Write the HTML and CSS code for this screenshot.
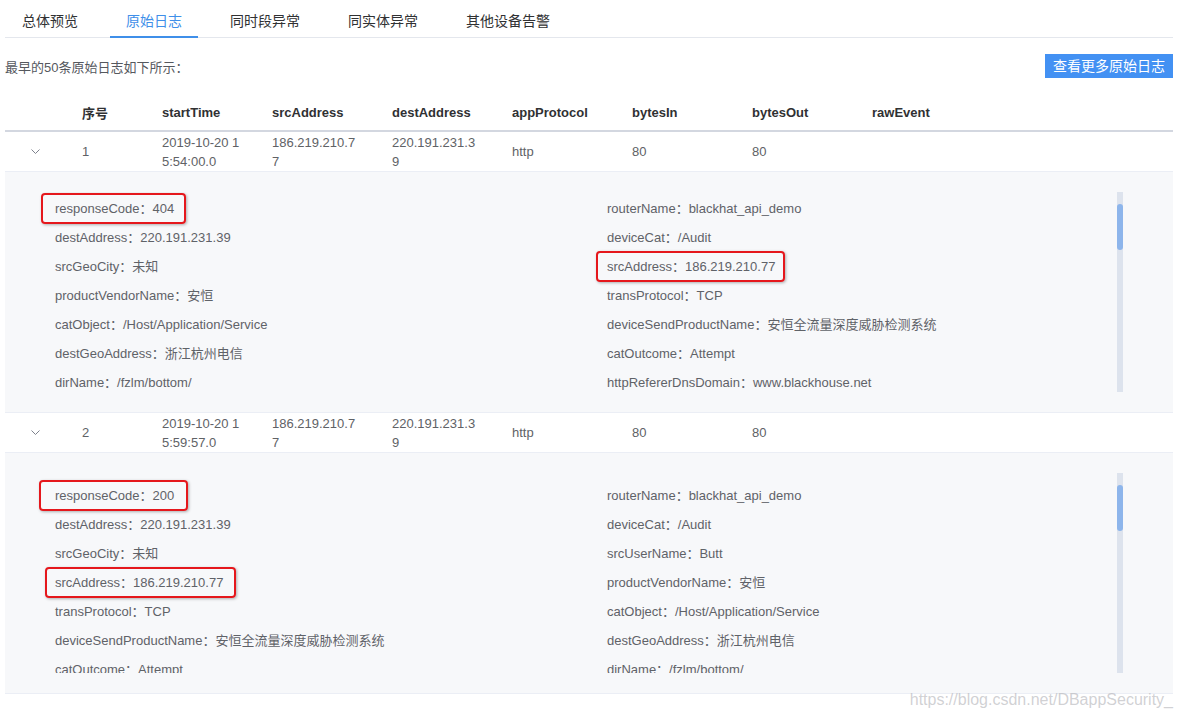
FILE: index.html
```html
<!DOCTYPE html>
<html lang="zh">
<head>
<meta charset="utf-8">
<title>原始日志</title>
<link rel="stylesheet" href="styles.css">
</head>
<body>
<div class="page">
  <nav class="tabs">
    <div class="tab">总体预览</div>
    <div class="tab active">原始日志</div>
    <div class="tab">同时段异常</div>
    <div class="tab">同实体异常</div>
    <div class="tab">其他设备告警</div>
  </nav>

  <div class="toolbar">
    <span class="subtitle">最早的50条原始日志如下所示：</span>
    <button class="btn">查看更多原始日志</button>
  </div>

  <div class="table">
    <div class="row head">
      <div class="c c-exp"></div>
      <div class="c">序号</div>
      <div class="c">startTime</div>
      <div class="c">srcAddress</div>
      <div class="c">destAddress</div>
      <div class="c">appProtocol</div>
      <div class="c">bytesIn</div>
      <div class="c">bytesOut</div>
      <div class="c">rawEvent</div>
    </div>

    <div class="row data">
      <div class="c c-exp"><svg class="chev" width="9" height="5" viewBox="0 0 9 5"><polyline points="0.5,0.5 4.5,4.5 8.5,0.5" fill="none" stroke="#7d818c" stroke-width="1"/></svg></div>
      <div class="c">1</div>
      <div class="c"><span class="wrap">2019-10-20 15:54:00.0</span></div>
      <div class="c"><span class="wrap">186.219.210.77</span></div>
      <div class="c"><span class="wrap">220.191.231.39</span></div>
      <div class="c">http</div>
      <div class="c">80</div>
      <div class="c">80</div>
      <div class="c"></div>
    </div>
    <div class="expand">
      <div class="scroll">
        <div class="list shifted">
          <div class="it"><span class="hl">responseCode：404</span></div>
          <div class="it"><span>routerName：blackhat_api_demo</span></div>
          <div class="it"><span>destAddress：220.191.231.39</span></div>
          <div class="it"><span>deviceCat：/Audit</span></div>
          <div class="it"><span>srcGeoCity：未知</span></div>
          <div class="it"><span class="hl hl-r">srcAddress：186.219.210.77</span></div>
          <div class="it"><span>productVendorName：安恒</span></div>
          <div class="it"><span>transProtocol：TCP</span></div>
          <div class="it"><span>catObject：/Host/Application/Service</span></div>
          <div class="it"><span>deviceSendProductName：安恒全流量深度威胁检测系统</span></div>
          <div class="it"><span>destGeoAddress：浙江杭州电信</span></div>
          <div class="it"><span>catOutcome：Attempt</span></div>
          <div class="it"><span>dirName：/fzlm/bottom/</span></div>
          <div class="it"><span>httpRefererDnsDomain：www.blackhouse.net</span></div>
        </div>
      </div>
      <div class="track"><div class="thumb"></div></div>
    </div>

    <div class="row data">
      <div class="c c-exp"><svg class="chev" width="9" height="5" viewBox="0 0 9 5"><polyline points="0.5,0.5 4.5,4.5 8.5,0.5" fill="none" stroke="#7d818c" stroke-width="1"/></svg></div>
      <div class="c">2</div>
      <div class="c"><span class="wrap">2019-10-20 15:59:57.0</span></div>
      <div class="c"><span class="wrap">186.219.210.77</span></div>
      <div class="c"><span class="wrap">220.191.231.39</span></div>
      <div class="c">http</div>
      <div class="c">80</div>
      <div class="c">80</div>
      <div class="c"></div>
    </div>
    <div class="expand">
      <div class="scroll">
        <div class="list">
          <div class="it"><span class="hl hl-l2">responseCode：200</span></div>
          <div class="it"><span>routerName：blackhat_api_demo</span></div>
          <div class="it"><span>destAddress：220.191.231.39</span></div>
          <div class="it"><span>deviceCat：/Audit</span></div>
          <div class="it"><span>srcGeoCity：未知</span></div>
          <div class="it"><span>srcUserName：Butt</span></div>
          <div class="it"><span class="hl hl-b">srcAddress：186.219.210.77</span></div>
          <div class="it"><span>productVendorName：安恒</span></div>
          <div class="it"><span>transProtocol：TCP</span></div>
          <div class="it"><span>catObject：/Host/Application/Service</span></div>
          <div class="it"><span>deviceSendProductName：安恒全流量深度威胁检测系统</span></div>
          <div class="it"><span>destGeoAddress：浙江杭州电信</span></div>
          <div class="it"><span>catOutcome：Attempt</span></div>
          <div class="it"><span>dirName：/fzlm/bottom/</span></div>
        </div>
      </div>
      <div class="track"><div class="thumb"></div></div>
    </div>
  </div>
</div>
<div class="watermark">https://blog.csdn.net/DBappSecurity_</div>
</body>
</html>
```

FILE: styles.css
```css
* { box-sizing: border-box; }

html, body {
  margin: 0;
  padding: 0;
  background: #ffffff;
}

body {
  font-family: "Liberation Sans", "Noto Sans CJK SC", sans-serif;
  color: #606266;
  font-size: 13px;
  position: relative;
  min-height: 717px;
}

.page {
  margin: 0 9px 0 5px;
}

/* Tabs */
.tabs {
  display: flex;
  height: 38px;
  border-bottom: 1px solid #e4e7ed;
}

.tab {
  position: relative;
  height: 37px;
  padding: 3px 24px 0;
  display: flex;
  align-items: center;
  font-size: 14px;
  color: #303133;
}

.tab:first-child {
  padding-left: 17px;
}

.tab.active {
  color: #3f8fe9;
}

.tab.active::after {
  content: "";
  position: absolute;
  left: 8px;
  right: 8px;
  bottom: -1px;
  height: 2px;
  background: #3f8fe9;
}

/* Toolbar */
.toolbar {
  margin-top: 16px;
  height: 24px;
  display: flex;
  align-items: center;
  justify-content: space-between;
}

.subtitle {
  font-size: 13px;
  color: #55585e;
}

.btn {
  height: 24px;
  padding: 0 8px;
  border: none;
  border-radius: 0;
  background: #4391f3;
  color: #ffffff;
  font-family: "Liberation Sans", "Noto Sans CJK SC", sans-serif;
  font-size: 14px;
  line-height: 24px;
  cursor: pointer;
}

/* Table */
.table {
  margin-top: 16px;
}

.row {
  display: grid;
  grid-template-columns: 65px 80px 110px repeat(5, 120px) 1fr;
}

.row.head {
  height: 38px;
  border-bottom: 2px solid #d3d7e0;
  font-weight: bold;
  color: #303133;
}

.row.data {
  height: 40px;
  border-bottom: 1px solid #ebeef5;
  line-height: 19px;
}

.c {
  display: flex;
  align-items: center;
  padding-left: 12px;
  min-width: 0;
}

.c-exp {
  padding-left: 26px;
}

.chev {
  display: block;
}

.wrap {
  display: block;
  width: 84px;
  word-break: break-all;
}

/* Expanded row */
.expand {
  display: flex;
  height: 241px;
  padding: 20px 50px 20px 0;
  background: #f7f8fa;
  border-bottom: 1px solid #ebeef5;
}

.scroll {
  flex: 1;
  height: 200px;
  padding-left: 50px;
  overflow: hidden;
}

.list {
  display: grid;
  grid-template-columns: 552px 1fr;
  padding-top: 8px;
}

.list.shifted {
  margin-top: -6px;
}

.it {
  height: 29px;
  line-height: 29px;
  white-space: nowrap;
  color: #5f6268;
}

.it span {
  display: inline-block;
  position: relative;
}

.hl::after {
  content: "";
  position: absolute;
  left: -14px;
  right: -12px;
  top: -1px;
  bottom: -1px;
  border: 2px solid #e5171c;
  border-radius: 4px;
  box-shadow: 1px 1px 3px rgba(0, 0, 0, 0.3);
}

.hl-r::after {
  left: -11px;
  right: -10px;
}

.hl-l2::after {
  left: -16px;
  right: -14px;
}

.hl-b::after {
  left: -10px;
  right: -13px;
}

.track {
  width: 6px;
  height: 200px;
  background: #dde3ed;
  padding-top: 12px;
}

.thumb {
  width: 6px;
  height: 46px;
  border-radius: 3px;
  background: #8db5eb;
}

/* Watermark overlay */
.watermark {
  position: absolute;
  right: 9px;
  top: 690px;
  font-size: 16px;
  line-height: 20px;
  color: rgba(170, 170, 175, 0.55);
  white-space: nowrap;
}
```
